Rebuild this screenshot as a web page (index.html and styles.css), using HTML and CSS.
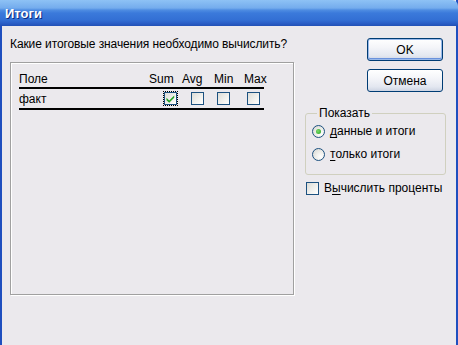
FILE: index.html
```html
<!DOCTYPE html>
<html lang="ru">
<head>
<meta charset="utf-8">
<title>Итоги</title>
<link rel="stylesheet" href="styles.css">
</head>
<body>
<div class="window">
  <div class="titlebar"><span class="title">Итоги</span></div>
  <div class="client">
    <div class="left">
      <div class="question">Какие итоговые значения необходимо вычислить?</div>
      <div class="listbox">
        <div class="grid head">
          <div class="name">Поле</div>
          <div class="c-sum">Sum</div>
          <div class="c-avg">Avg</div>
          <div class="c-min">Min</div>
          <div class="c-max">Max</div>
        </div>
        <div class="grid row">
          <div class="name">факт</div>
          <div class="c-sum"><span class="focus"><span class="chk checked"><svg viewBox="0 0 13 13" width="13" height="13"><path d="M2.5 5.8 L5.2 8.4 L10.2 3.4 L10.2 5.8 L5.2 10.8 L2.5 8.2 Z" fill="#21a121"/></svg></span></span></div>
          <div class="c-avg"><span class="chk"></span></div>
          <div class="c-min"><span class="chk"></span></div>
          <div class="c-max"><span class="chk"></span></div>
        </div>
      </div>
    </div>
    <div class="right">
      <button class="btn default">OK</button>
      <button class="btn">Отмена</button>
      <fieldset class="group">
        <legend>Показать</legend>
        <label class="opt"><span class="radio on"><span class="dot"></span></span><span><u>д</u>анные и итоги</span></label>
        <label class="opt"><span class="radio"></span><span><u>т</u>олько итоги</span></label>
      </fieldset>
      <label class="opt pct"><span class="chk"></span><span>В<u>ы</u>числить проценты</span></label>
    </div>
  </div>
</div>
</body>
</html>
```

FILE: styles.css
```css
html, body {
  margin: 0;
  padding: 0;
  width: 458px;
  height: 345px;
  overflow: hidden;
}
body {
  font-family: "Liberation Sans", Arial, sans-serif;
  font-size: 12px;
  color: #000;
}
.window {
  width: 458px;
  height: 345px;
  box-sizing: border-box;
  border-left: 2px solid #1f4fbf;
  border-right: 2px solid #1f4fbf;
  background: #ebe9ed;
  display: flex;
  flex-direction: column;
}
.titlebar {
  height: 26px;
  flex: none;
  margin: 0 -2px;
  background: linear-gradient(#8ec2f5 0, #74aced 8px, #4f8de2 10px, #3b7adb 13px, #336fd4 20px, #2b60c8 23px, #2250b6 26px);
  display: flex;
  align-items: center;
  padding-left: 5px;
  border-radius: 0 6px 0 0;
}
.title {
  font-family: "Liberation Sans", Arial, sans-serif;
  font-weight: bold;
  font-size: 13px;
  color: #fff;
  text-shadow: 1px 1px 0 #0a2a80;
  margin-top: 1px;
}
.client {
  flex: 1;
  display: flex;
  padding-left: 8px;
}
.left {
  width: 284px;
  flex: none;
  padding-top: 11px;
}
.question {
  line-height: 14px;
  height: 14px;
  letter-spacing: -0.1px;
}
.listbox {
  margin-top: 11px;
  height: 233px;
  box-sizing: border-box;
  border: 1px solid #a0a0a0;
  box-shadow: 1px 1px 0 #fff, inset 1px 1px 0 #fff;
  padding: 8px 0 0 8px;
}
.grid {
  display: grid;
  grid-template-columns: 130px 33px 32px 30px 20px;
  width: 245px;
  border-bottom: 2px solid #000;
  align-items: center;
}
.head {
  height: 16px;
  line-height: 14px;
}
.row {
  height: 19px;
}
.row .c-sum { padding-left: 14px; }
.row .c-avg { padding-left: 9px; }
.row .c-min { padding-left: 3px; }
.row .c-max { padding-left: 3px; }
.row > div { display: flex; align-items: center; }
.chk {
  display: inline-block;
  width: 13px;
  height: 13px;
  box-sizing: border-box;
  border: 1px solid #1c5180;
  background: linear-gradient(135deg, #dcdcd7 0%, #f2f2ef 60%, #ffffff 100%);
  flex: none;
  position: relative;
}
.chk svg {
  position: absolute;
  left: -1px;
  top: -1px;
}
.focus {
  display: inline-flex;
  padding: 1px;
  outline: 1px dotted #000;
  outline-offset: -1px;
}
.right {
  width: 141px;
  margin-left: 11px;
  flex: none;
  display: flex;
  flex-direction: column;
  padding-top: 12px;
}
.btn {
  align-self: flex-end;
  margin-right: 3px;
  width: 76px;
  height: 23px;
  box-sizing: border-box;
  border: 1px solid #003c74;
  border-radius: 3px;
  background: linear-gradient(#ffffff 0%, #f4f5f9 40%, #e3e7f0 80%, #cdd4e3 100%);
  font-family: "Liberation Sans", Arial, sans-serif;
  font-size: 12px;
  color: #000;
  padding: 0;
  margin-bottom: 8px;
}
.btn.default {
  box-shadow: inset 0 0 0 1px #98b8ea, inset 0 -1px 0 1px #6a92dc;
}
.group {
  margin: 6px 0 0 0;
  padding: 4px 5px 6px 6px;
  border: 1px solid #d0d0bf;
  border-radius: 3px;
  min-width: 0;
  width: 141px;
  height: 69px;
  box-sizing: border-box;
  display: flex;
  flex-direction: column;
  gap: 9px;
}
.group legend {
  padding: 0 2px;
  margin-left: 5px;
  line-height: 14px;
}
.opt {
  display: flex;
  align-items: center;
  gap: 5px;
  height: 14px;
}
.radio {
  width: 13px;
  height: 13px;
  box-sizing: border-box;
  border: 1px solid #1c5180;
  border-radius: 50%;
  background: radial-gradient(circle at 70% 70%, #ffffff 0%, #f0f0ec 40%, #d4d4ce 100%);
  display: flex;
  align-items: center;
  justify-content: center;
  flex: none;
}
.dot {
  width: 5px;
  height: 5px;
  border-radius: 50%;
  background: radial-gradient(circle at 40% 40%, #7cdc6a, #21a121);
}
.pct {
  margin-top: 6px;
  margin-left: 1px;
}
u {
  text-decoration-thickness: 1px;
  text-underline-offset: 2px;
}
```
